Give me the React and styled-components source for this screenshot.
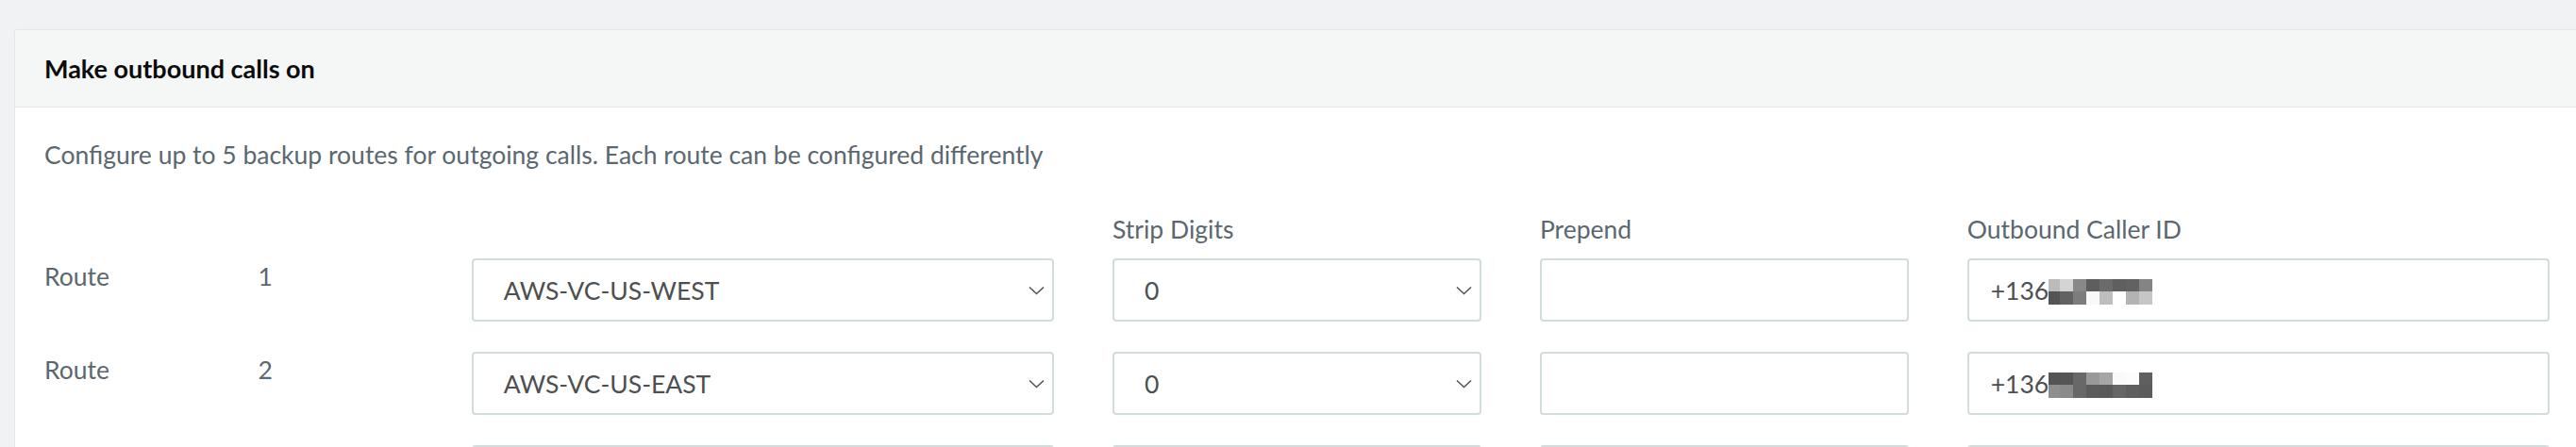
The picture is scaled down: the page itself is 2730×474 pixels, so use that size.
import React from "react"
import styled, { createGlobalStyle } from "styled-components"

const Global = createGlobalStyle`
    html, body {
        margin: 0;
        padding: 0;
        background: #f1f2f4;
        overflow: hidden;
        font-family: Lato, "Noto Sans", sans-serif;
    }
`

const Page = styled.div`
    padding: 31px 0 0 15px;
    width: 2760px;
`

const Card = styled.section`
    width: 2717px;
    background: #fff;
    border: 1px solid #e1e7e7;
    border-radius: 3px;
`

const CardHeader = styled.header`
    height: 81px;
    display: flex;
    align-items: center;
    padding: 0 31px;
    background: #f5f7f7;
    border-bottom: 1px solid #e3e9e9;
`

const Title = styled.h2`
    margin: 0;
    font-size: 27px;
    line-height: 32px;
    font-weight: 700;
    color: #0b0b0b;
`

const CardBody = styled.div`
    padding: 34px 31px 40px;
`

const Description = styled.p`
    margin: 0 0 47px;
    font-size: 26.5px;
    line-height: 32px;
    color: #5b6770;
`

const Row = styled.div`
    display: grid;
    grid-template-columns: repeat(12, 1fr);
    column-gap: 62px;
    margin-bottom: ${p => p.$gap || 32}px;
`

const Cell = styled.div`
    grid-column: span ${p => p.$span || 1};
    min-width: 0;
`

const ColLabel = styled.div`
    font-size: 26.5px;
    line-height: 32px;
    color: #5b6770;
`

const RowLabel = styled.div`
    font-size: 26.5px;
    line-height: 38px;
    color: #5b6770;
`

const Field = styled.div`
    height: 67px;
    box-sizing: border-box;
    border: 2px solid #d2dcdd;
    border-radius: 4px;
    background: #fff;
    display: flex;
    align-items: center;
    justify-content: space-between;
    padding: 0 8px 0 ${p => p.$select ? 32 : 23}px;
    font-size: 26.5px;
    color: #4d4f51;
`

const Value = styled.span`
    display: flex;
    align-items: center;
`

const Chevron = () =>
    <svg width="17" height="10" viewBox="0 0 17 10" fill="none">
        <path d="M1 1.5 L8.5 8.5 L16 1.5" stroke="#555" strokeWidth="1.6"/>
    </svg>

const blur = {
    a: [
        ["#bbbbbb", "#d4d4d4", "#888888", "#5e5e5e", "#6b6b6b", "#5f5f5f", "#626262", "#848484"],
        ["#545454", "#626262", "#7c7c7c", "#f9f9f9", "#bebebe", "#ffffff", "#b3b3b3", "#c6c6c6"]
    ],
    b: [
        ["#545454", "#555555", "#686868", "#999999", "#a6a6a6", "#fafafa", "#fcfcfc", "#5f5f5f"],
        ["#8e8e8e", "#8a8a8a", "#686868", "#5c5c5c", "#5a5a5a", "#666666", "#5f5f5f", "#5c5c5c"]
    ]
}

const Mosaic = ({ cells }) =>
    <svg width="111" height="27" viewBox="0 0 111 27" style={{ marginTop: 4 }}>
        {cells.map((row, r) =>
            row.map((c, i) =>
                <rect key={r + "-" + i} x={i === 0 ? 0 : 12 + (i - 1) * 14} y={r * 13}
                    width={i === 0 ? 12 : 14} height={r === 0 ? 13 : 14} fill={c}/>
            )
        )}
    </svg>

const routes = [
    { n: 1, trunk: "AWS-VC-US-WEST", strip: "0", cid: "a" },
    { n: 2, trunk: "AWS-VC-US-EAST", strip: "0", cid: "b" },
    { n: 3, trunk: "AWS-VC-US-WEST", strip: "0", cid: "a" }
]

const RouteRow = ({ route }) =>
    <Row>
        <Cell><RowLabel>Route</RowLabel></Cell>
        <Cell><RowLabel>{route.n}</RowLabel></Cell>
        <Cell $span={3}>
            <Field $select>{route.trunk}<Chevron/></Field>
        </Cell>
        <Cell $span={2}>
            <Field $select>{route.strip}<Chevron/></Field>
        </Cell>
        <Cell $span={2}>
            <Field/>
        </Cell>
        <Cell $span={3}>
            <Field>
                <Value>+136<Mosaic cells={blur[route.cid]}/></Value>
            </Field>
        </Cell>
    </Row>

const App = () =>
    <>
        <Global/>
        <Page>
            <Card>
                <CardHeader>
                    <Title>Make outbound calls on</Title>
                </CardHeader>
                <CardBody>
                    <Description>
                        Configure up to 5 backup routes for outgoing calls. Each route can be configured differently
                    </Description>
                    <Row $gap={15}>
                        <Cell $span={5}/>
                        <Cell $span={2}><ColLabel>Strip Digits</ColLabel></Cell>
                        <Cell $span={2}><ColLabel>Prepend</ColLabel></Cell>
                        <Cell $span={3}><ColLabel>Outbound Caller ID</ColLabel></Cell>
                    </Row>
                    {routes.map(r => <RouteRow key={r.n} route={r}/>)}
                </CardBody>
            </Card>
        </Page>
    </>

export default App
